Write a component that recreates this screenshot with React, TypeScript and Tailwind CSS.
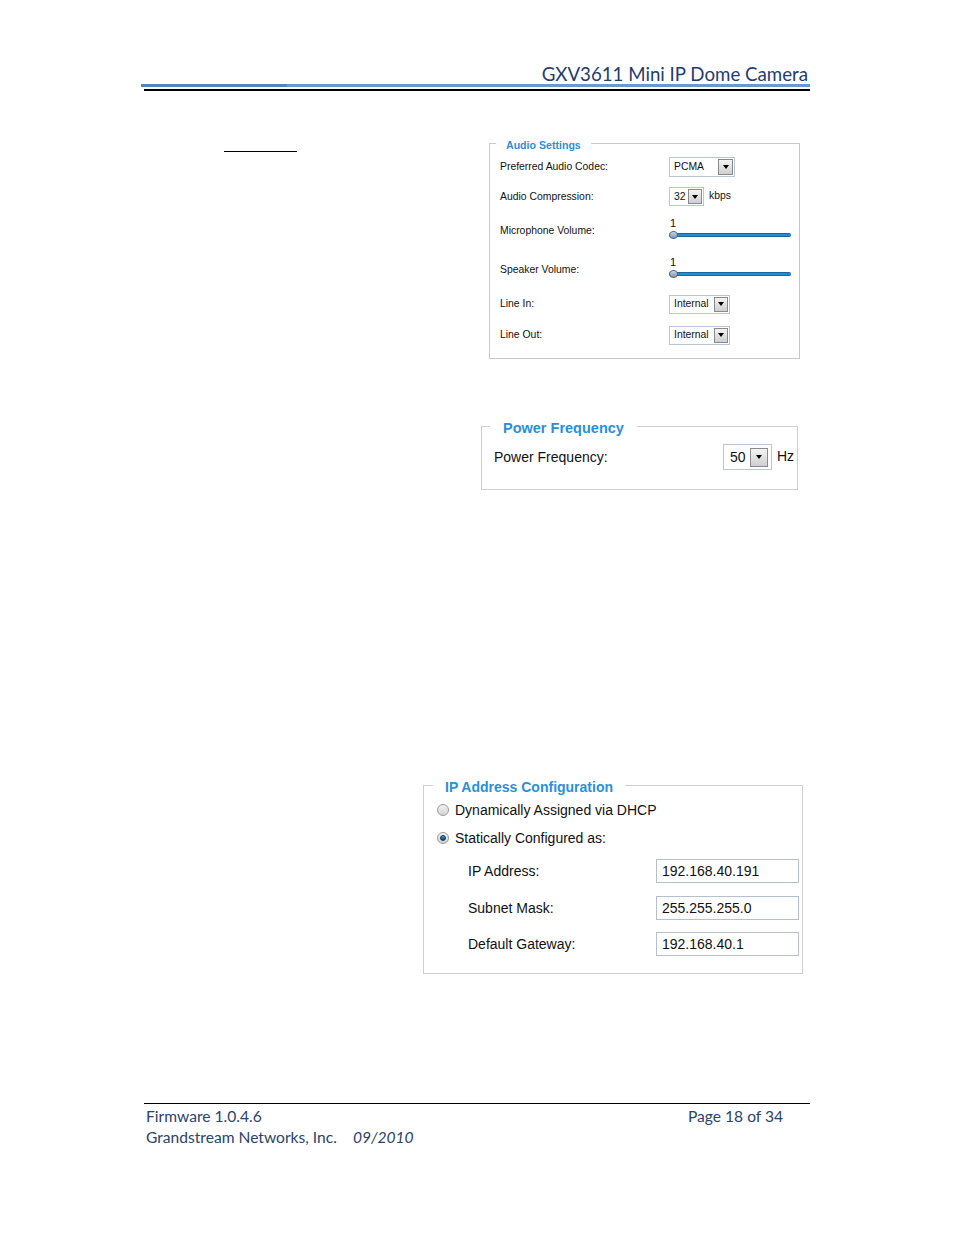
import React from 'react'

const uiFont = { fontFamily: '"Liberation Sans", Arial, sans-serif' }
const docFont = { fontFamily: 'Lato, "Open Sans", sans-serif' }

function Arrow({ w, h }: { w: string; h: string }) {
  return (
    <span
      className={`${w} ${h} flex items-center justify-center border border-[#8a8a8a] bg-gradient-to-b from-[#f4f4f4] to-[#cfcfcf]`}
    >
      <span className="w-0 h-0 border-l-[3px] border-r-[3px] border-t-[4px] border-l-transparent border-r-transparent border-t-black" />
    </span>
  )
}

function SmallSelect({ value, width, height, textPad, arrowW, arrowH }: {
  value: string
  width: string
  height: string
  textPad: string
  arrowW: string
  arrowH: string
}) {
  return (
    <div className={`${width} ${height} flex items-center justify-between border border-[#b7c6d8] bg-white ${textPad} pr-[1px] text-[10.4px] text-[#111]`}>
      <span>{value}</span>
      <Arrow w={arrowW} h={arrowH} />
    </div>
  )
}

function Slider() {
  return (
    <div className="flex flex-col mt-[-4px]">
      <span className="text-[11px] leading-[12px] pl-[1px] text-[#111]">1</span>
      <div className="relative w-[122px] h-[12px] flex items-center">
        <div className="w-full h-[4px] rounded-full bg-[#1f8ed8] border-y border-[#17679f]" />
        <div className="absolute left-[0px] top-[2px] w-[9px] h-[8px] rounded-full border border-[#4d6a8f] bg-gradient-to-b from-[#c9d6e6] to-[#7d97b8]" />
      </div>
    </div>
  )
}

function Radio({ checked }: { checked?: boolean }) {
  return (
    <span className="w-[12px] h-[12px] rounded-full border border-[#9a9a9a] bg-gradient-to-b from-[#f2f2f2] to-[#d4d4d4] flex items-center justify-center">
      {checked && (
        <span className="w-[6px] h-[6px] rounded-full bg-gradient-to-b from-[#4aa0d8] to-[#0f3d66] border border-[#0e3558]" />
      )}
    </span>
  )
}

function TextBox({ value }: { value: string }) {
  return (
    <div className="w-[143px] h-[24px] border border-[#b3c0cf] bg-white flex items-center pl-[5px] text-[14px] text-[#111]">
      {value}
    </div>
  )
}

export default function App() {
  return (
    <div className="w-[954px] h-[1235px] bg-white overflow-hidden">
      {/* header */}
      <div className="ml-[141px] w-[669px] pt-[64px]" style={docFont}>
        <div className="text-right pr-[2px] text-[18.7px] leading-[20px] text-[#1f3d6b]">
          GXV3611 Mini IP Dome Camera
        </div>
        <div className="flex h-[3px]">
          <div className="w-[146px] bg-[#5583bd]" />
          <div className="flex-1 bg-[#6c98cd]" />
        </div>
        <div className="ml-[3px] mt-[2px] h-[2px] bg-black" />
      </div>

      {/* audio settings row */}
      <div className="flex items-start mt-[44px]" style={uiFont}>
        <div className="ml-[224px] mt-[16px] w-[73px] h-px bg-black" />
        <fieldset className="ml-[192px] w-[311px] border border-[#c9c9c9]">
          <legend className="ml-[6px] px-[10px] pt-[4px] text-[10.6px] leading-[13px] font-bold text-[#2b8fd8]">
            Audio Settings
          </legend>
          <div className="pl-[10px] pb-[6px] text-[10.4px] text-[#111]">
            <div className="flex items-center h-[29px]">
              <span className="w-[169px]">Preferred Audio Codec:</span>
              <SmallSelect value="PCMA" width="w-[66px]" height="h-[20px]" textPad="pl-[4px]" arrowW="w-[15px]" arrowH="h-[16px]" />
            </div>
            <div className="flex items-center h-[31px]">
              <span className="w-[169px]">Audio Compression:</span>
              <SmallSelect value="32" width="w-[35px]" height="h-[19px]" textPad="pl-[4px]" arrowW="w-[14px]" arrowH="h-[15px]" />
              <span className="ml-[5px] -mt-[2px]">kbps</span>
            </div>
            <div className="flex items-center h-[37px]">
              <span className="w-[169px]">Microphone Volume:</span>
              <Slider />
            </div>
            <div className="flex items-center h-[41px]">
              <span className="w-[169px]">Speaker Volume:</span>
              <Slider />
            </div>
            <div className="flex items-center h-[28px]">
              <span className="w-[169px]">Line In:</span>
              <SmallSelect value="Internal" width="w-[61px]" height="h-[19px]" textPad="pl-[4px]" arrowW="w-[14px]" arrowH="h-[15px]" />
            </div>
            <div className="flex items-center h-[34px]">
              <span className="w-[169px]">Line Out:</span>
              <SmallSelect value="Internal" width="w-[61px]" height="h-[19px]" textPad="pl-[4px]" arrowW="w-[14px]" arrowH="h-[15px]" />
            </div>
          </div>
        </fieldset>
      </div>

      {/* power frequency */}
      <fieldset className="ml-[481px] mt-[57px] w-[317px] border border-[#cfcfcf]" style={uiFont}>
        <legend className="ml-[8px] px-[13px] pt-[4px] text-[14.5px] leading-[16px] font-bold text-[#2b8fd8]">
          Power Frequency
        </legend>
        <div className="flex items-center h-[26px] mt-[8px] mb-[19px] pl-[12px] text-[14px] text-[#111]">
          <span className="w-[229px]">Power Frequency:</span>
          <div className="w-[49px] h-[26px] flex items-center justify-between border border-[#b7c6d8] bg-white pl-[6px] pr-[3px]">
            <span>50</span>
            <Arrow w="w-[18px]" h="h-[19px]" />
          </div>
          <span className="ml-[5px] -mt-[2px]">Hz</span>
        </div>
      </fieldset>

      {/* ip address configuration */}
      <fieldset className="ml-[423px] mt-[285px] w-[380px] border border-[#cfcfcf]" style={uiFont}>
        <legend className="ml-[9px] px-[12px] pt-[4px] text-[14px] leading-[16px] font-bold text-[#2b8fd8]">
          IP Address Configuration
        </legend>
        <div className="pl-[13px] pt-[1px] pb-[17px] text-[14px] text-[#111]">
          <div className="flex items-center h-[28px] gap-[6px]">
            <Radio />
            <span>Dynamically Assigned via DHCP</span>
          </div>
          <div className="flex items-center h-[28px] gap-[6px]">
            <Radio checked />
            <span>Statically Configured as:</span>
          </div>
          <div className="pl-[31px]">
            <div className="flex items-center mt-[7px]">
              <span className="w-[188px]">IP Address:</span>
              <TextBox value="192.168.40.191" />
            </div>
            <div className="flex items-center mt-[13px]">
              <span className="w-[188px]">Subnet Mask:</span>
              <TextBox value="255.255.255.0" />
            </div>
            <div className="flex items-center mt-[12px]">
              <span className="w-[188px]">Default Gateway:</span>
              <TextBox value="192.168.40.1" />
            </div>
          </div>
        </div>
      </fieldset>

      {/* footer */}
      <div className="ml-[144px] w-[666px] mt-[129px]" style={docFont}>
        <div className="h-px bg-black" />
        <div className="flex pl-[2px] pt-[2px] text-[15.6px] leading-[21px] text-[#2c4368]">
          <div className="w-[542px]">
            <div>Firmware 1.0.4.6</div>
            <div>
              Grandstream Networks, Inc.<span className="ml-[16px] italic">09/2010</span>
            </div>
          </div>
          <div>Page 18 of 34</div>
        </div>
      </div>
    </div>
  )
}
